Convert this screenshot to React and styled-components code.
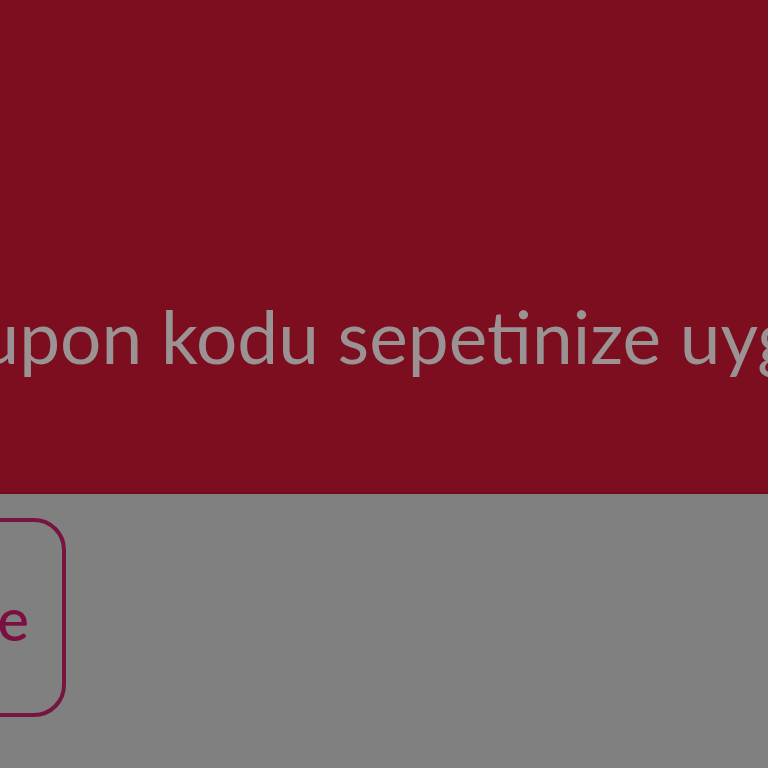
import React from 'react'
import styled, { createGlobalStyle } from 'styled-components'

const GlobalStyle = createGlobalStyle`
	html, body {
		margin: 0;
		padding: 0;
		background: #808080;
		overflow: hidden;
	}
	* {
		box-sizing: border-box;
	}
`

const App = () => {
	return (
		<>
			<GlobalStyle />
			<Page>
				<Banner>
					<Message>Kupon kodu sepetinize uygulandı</Message>
				</Banner>
				<Footer>
					<ActionButton>Düzenle</ActionButton>
				</Footer>
			</Page>
		</>
	)
}

export default App

const Page = styled.div`
	width: 768px;
	height: 768px;
	display: flex;
	flex-direction: column;
	overflow: hidden;
	font-family: Lato, 'Open Sans', sans-serif;
`

const Banner = styled.section`
	height: 494px;
	flex-shrink: 0;
	background-color: #7d0e20;
	border-bottom: 2px solid #6e0c1d;
	padding-top: 293px;
	overflow: hidden;
`

const Message = styled.p`
	margin: 0 0 0 -68px;
	white-space: nowrap;
	font-size: 73px;
	line-height: 1.2;
	font-weight: 400;
	color: #9b9294;
`

const Footer = styled.section`
	flex: 1;
	background-color: #808080;
	padding-top: 24px;
`

const ActionButton = styled.button`
	display: flex;
	align-items: center;
	justify-content: flex-end;
	width: 300px;
	height: 199px;
	margin-left: -234px;
	padding: 0 33px 0 0;
	border: 4px solid #761540;
	border-radius: 32px;
	background: transparent;
	font-family: Lato, 'Open Sans', sans-serif;
	font-size: 60px;
	font-weight: 500;
	line-height: 1;
	color: #7a1040;
	white-space: nowrap;
	overflow: hidden;
`
